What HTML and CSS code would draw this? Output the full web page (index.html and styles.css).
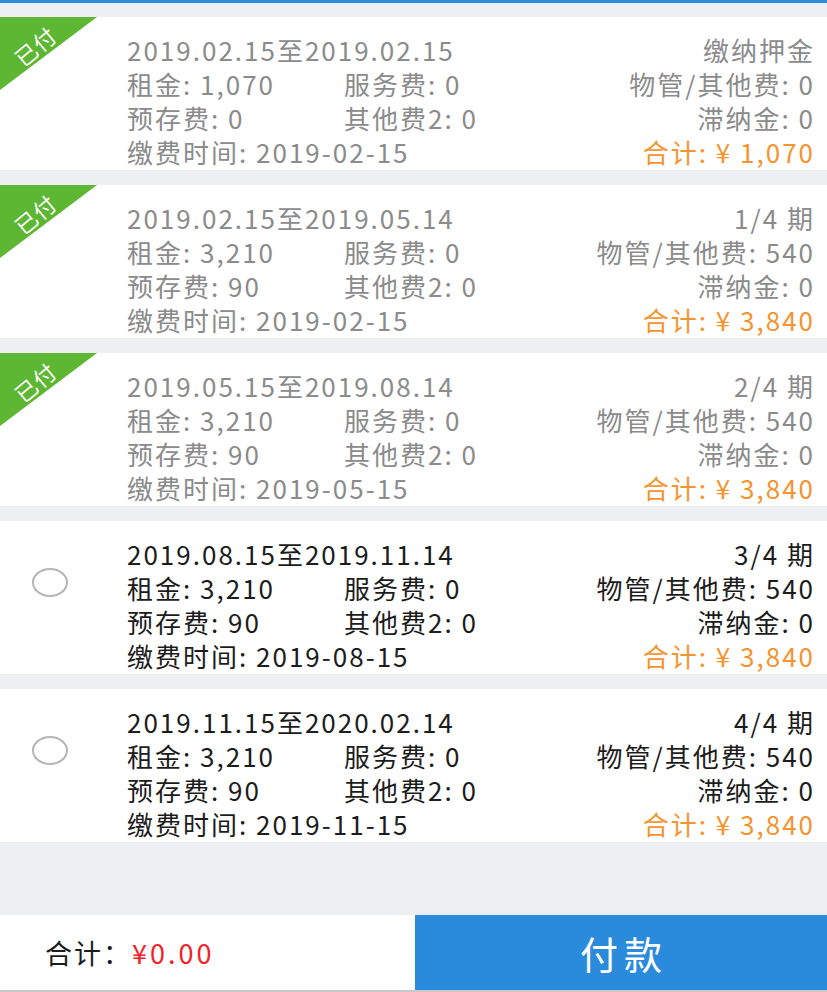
FILE: index.html
```html
<!DOCTYPE html>
<html lang="zh-CN">
<head>
    <meta charset="UTF-8">
    <meta name="viewport" content="width=device-width, initial-scale=1.0">
    <title>缴费账单</title>
    <link rel="stylesheet" href="styles.css">
</head>
<body>
    <div class="pagina">
        <div class="barra-top"></div>

        <div class="lista">
            <div class="periodo pagado">
                <div class="lado">
                    <svg class="sello" width="97" height="73" viewBox="0 0 97 73">
                        <polygon points="0,0 97,0 0,73" fill="#5db732"/>
                        <text x="36" y="38" transform="rotate(-40 36 30)" text-anchor="middle" fill="#fff" font-size="22" letter-spacing="1" font-family="Noto Sans CJK SC, sans-serif">已付</text>
                    </svg>
                </div>
                <div class="datos">
                    <div class="fila"><span class="ancho">2019.02.15至2019.02.15</span><span class="der">缴纳押金</span></div>
                    <div class="fila"><span>租金: 1,070</span><span>服务费: 0</span><span class="der">物管/其他费: 0</span></div>
                    <div class="fila"><span>预存费: 0</span><span>其他费2: 0</span><span class="der">滞纳金: 0</span></div>
                    <div class="fila"><span class="ancho">缴费时间: 2019-02-15</span><span class="der total">合计: ¥ 1,070</span></div>
                </div>
            </div>

            <div class="periodo pagado">
                <div class="lado">
                    <svg class="sello" width="97" height="73" viewBox="0 0 97 73">
                        <polygon points="0,0 97,0 0,73" fill="#5db732"/>
                        <text x="36" y="38" transform="rotate(-40 36 30)" text-anchor="middle" fill="#fff" font-size="22" letter-spacing="1" font-family="Noto Sans CJK SC, sans-serif">已付</text>
                    </svg>
                </div>
                <div class="datos">
                    <div class="fila"><span class="ancho">2019.02.15至2019.05.14</span><span class="der">1/4 期</span></div>
                    <div class="fila"><span>租金: 3,210</span><span>服务费: 0</span><span class="der">物管/其他费: 540</span></div>
                    <div class="fila"><span>预存费: 90</span><span>其他费2: 0</span><span class="der">滞纳金: 0</span></div>
                    <div class="fila"><span class="ancho">缴费时间: 2019-02-15</span><span class="der total">合计: ¥ 3,840</span></div>
                </div>
            </div>

            <div class="periodo pagado">
                <div class="lado">
                    <svg class="sello" width="97" height="73" viewBox="0 0 97 73">
                        <polygon points="0,0 97,0 0,73" fill="#5db732"/>
                        <text x="36" y="38" transform="rotate(-40 36 30)" text-anchor="middle" fill="#fff" font-size="22" letter-spacing="1" font-family="Noto Sans CJK SC, sans-serif">已付</text>
                    </svg>
                </div>
                <div class="datos">
                    <div class="fila"><span class="ancho">2019.05.15至2019.08.14</span><span class="der">2/4 期</span></div>
                    <div class="fila"><span>租金: 3,210</span><span>服务费: 0</span><span class="der">物管/其他费: 540</span></div>
                    <div class="fila"><span>预存费: 90</span><span>其他费2: 0</span><span class="der">滞纳金: 0</span></div>
                    <div class="fila"><span class="ancho">缴费时间: 2019-05-15</span><span class="der total">合计: ¥ 3,840</span></div>
                </div>
            </div>

            <div class="periodo">
                <div class="lado">
                    <span class="radio"></span>
                </div>
                <div class="datos">
                    <div class="fila"><span class="ancho">2019.08.15至2019.11.14</span><span class="der">3/4 期</span></div>
                    <div class="fila"><span>租金: 3,210</span><span>服务费: 0</span><span class="der">物管/其他费: 540</span></div>
                    <div class="fila"><span>预存费: 90</span><span>其他费2: 0</span><span class="der">滞纳金: 0</span></div>
                    <div class="fila"><span class="ancho">缴费时间: 2019-08-15</span><span class="der total">合计: ¥ 3,840</span></div>
                </div>
            </div>

            <div class="periodo">
                <div class="lado">
                    <span class="radio"></span>
                </div>
                <div class="datos">
                    <div class="fila"><span class="ancho">2019.11.15至2020.02.14</span><span class="der">4/4 期</span></div>
                    <div class="fila"><span>租金: 3,210</span><span>服务费: 0</span><span class="der">物管/其他费: 540</span></div>
                    <div class="fila"><span>预存费: 90</span><span>其他费2: 0</span><span class="der">滞纳金: 0</span></div>
                    <div class="fila"><span class="ancho">缴费时间: 2019-11-15</span><span class="der total">合计: ¥ 3,840</span></div>
                </div>
            </div>
        </div>

        <div class="pie">
            <div class="suma">合计：<span class="monto">¥0.00</span></div>
            <button class="boton-pagar">付款</button>
        </div>
    </div>
</body>
</html>
```

FILE: styles.css
```css
body {
    margin: 0;
    padding: 0;
    background-color: #eeeff3;
    font-family: "Noto Sans CJK SC", sans-serif;
    color: #1c1c1c;
}

.pagina {
    display: flex;
    flex-direction: column;
    height: 100vh;
}

.barra-top {
    height: 3px;
    background-color: #2a8bdc;
}

.lista {
    flex: 1;
    display: flex;
    flex-direction: column;
    gap: 15px;
    padding-top: 14px;
}

.periodo {
    position: relative;
    display: flex;
    background-color: white;
    height: 153px;
    box-sizing: border-box;
    padding: 16px 12px 1px 0;
}

.lado {
    width: 127px;
    flex-shrink: 0;
}

.sello {
    position: absolute;
    top: 0;
    left: 0;
}

.radio {
    display: block;
    width: 32px;
    height: 25px;
    border: 2px solid #b5b5b5;
    border-radius: 50%;
    margin: 31px 0 0 32px;
}

.datos {
    flex: 1;
    font-size: 26px;
    line-height: 34px;
    letter-spacing: 2px;
    white-space: nowrap;
}

.fila {
    display: grid;
    grid-template-columns: 217px 1fr auto;
}

.fila .ancho {
    grid-column: span 2;
}

.fila .der {
    text-align: right;
}

.pagado .datos {
    color: #8b8b8b;
}

.fila .total {
    color: #f5942e;
}

.pie {
    display: flex;
    height: 77px;
    background-color: white;
    border-bottom: 2px solid #c8c8c8;
    box-sizing: border-box;
}

.suma {
    width: 415px;
    display: flex;
    align-items: center;
    padding-left: 45px;
    box-sizing: border-box;
    font-size: 27px;
    letter-spacing: 2px;
}

.monto {
    color: #f2222a;
    letter-spacing: 3px;
}

.boton-pagar {
    flex: 1;
    background-color: #2a8bdc;
    color: white;
    border: none;
    font-family: "Noto Sans CJK SC", sans-serif;
    font-size: 38px;
    letter-spacing: 6px;
    padding-left: 12px;
    cursor: pointer;
}
```
